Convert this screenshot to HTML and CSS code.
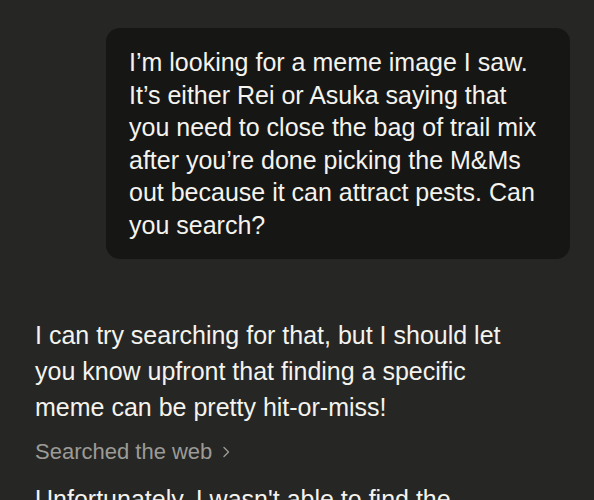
FILE: index.html
```html
<!DOCTYPE html>
<html lang="en">
<head>
<meta charset="utf-8">
<title>Chat</title>
<link rel="stylesheet" href="styles.css">
</head>
<body>
<main class="chat">
  <div class="user-row">
    <div class="bubble">I’m looking for a meme image I saw. It’s either Rei or Asuka saying that you need to close the bag of trail mix after you’re done picking the M&amp;Ms out because it can attract pests. Can you search?</div>
  </div>
  <div class="reply">
    <p class="para">I can try searching for that, but I should let you know upfront that finding a specific meme can be pretty hit-or-miss!</p>
    <div class="search">
      <span>Searched the web</span>
      <svg class="chev" width="9" height="12" viewBox="0 0 9 12" aria-hidden="true"><path d="M2 1.5 L6.5 6 L2 10.5" fill="none" stroke="currentColor" stroke-width="1.4" stroke-linecap="round" stroke-linejoin="round"/></svg>
    </div>
    <p class="para next">Unfortunately, I wasn't able to find the specific meme image you described.</p>
  </div>
</main>
</body>
</html>
```

FILE: styles.css
```css
html, body {
  margin: 0;
  padding: 0;
  background: #262624;
  height: 100%;
  overflow: hidden;
}
body {
  font-family: "Liberation Sans", Arial, sans-serif;
  color: #f4f3ee;
}
.chat {
  display: flex;
  flex-direction: column;
  padding-top: 28px;
}
.user-row {
  display: flex;
  padding: 0 24px 0 106px;
}
.bubble {
  flex: 1;
  background: #161615;
  border-radius: 14px;
  padding: 18px 23px 17px 23px;
  font-size: 25px;
  line-height: 32.6px;
}
.reply {
  padding: 58px 0 0 35px;
  width: 480px;
}
.para {
  margin: 0;
  font-size: 25px;
  line-height: 36px;
}
.search {
  display: flex;
  align-items: center;
  gap: 10px;
  margin-top: 13px;
  font-size: 22px;
  line-height: 28px;
  color: #9c9b96;
}
.chev {
  margin-top: 1px;
}
.next {
  margin-top: 15px;
}
```
